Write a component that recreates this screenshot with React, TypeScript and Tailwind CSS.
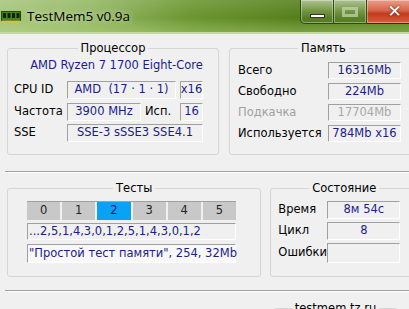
import type { ReactNode } from 'react'

function Field({ children, className = '' }: { children?: ReactNode; className?: string }) {
    return (
        <div
            className={`flex items-center justify-center whitespace-pre border border-t-[#a0a0a0] border-l-[#a0a0a0] border-r-white border-b-white text-[#1c1c8a] ${className}`}
        >
            {children}
        </div>
    )
}

function GroupBox({ title, className = '', children }: { title: string; className?: string; children: ReactNode }) {
    return (
        <fieldset className={`rounded-[3px] border border-[#d5d5d5] ${className}`}>
            <legend className="mx-auto px-[3px] leading-[14px] text-black">{title}</legend>
            {children}
        </fieldset>
    )
}

function RamIcon() {
    return (
        <svg width="20" height="12" viewBox="0 0 20 12">
            <rect x="0.5" y="0.5" width="19" height="9" fill="#3f8a1c" stroke="#1f4a0c" />
            <rect x="2" y="2" width="3" height="5" fill="#1a1a1a" />
            <rect x="6.5" y="2" width="3" height="5" fill="#1a1a1a" />
            <rect x="11" y="2" width="3" height="5" fill="#1a1a1a" />
            <rect x="15.5" y="2" width="3" height="5" fill="#1a1a1a" />
            <rect x="1" y="9.5" width="18" height="2" fill="#e0c040" />
        </svg>
    )
}

function TitleBar() {
    return (
        <div className="flex h-[34px] w-[425px] border-b-2 border-[#c3d8a2] bg-[linear-gradient(to_right,#a8c67c_0%,#93b762_22%,#6a9630_45%,#557f1b_70%,#5a861f_100%)]">
            <div className="flex h-full w-full bg-[linear-gradient(to_bottom,rgba(255,255,255,0.12)_0%,rgba(255,255,255,0)_55%,rgba(190,220,140,0.35)_100%)]">
                <div className="flex items-center gap-[6px] pl-[1px] pt-[1px]">
                    <RamIcon />
                    <span className="font-['Open_Sans',sans-serif] text-[13.5px] text-black [text-shadow:0_0_6px_rgba(255,255,255,0.8)]">
                        TestMem5 v0.9a
                    </span>
                </div>
                <div className="ml-auto mr-[2px] flex h-[24px]">
                    <div className="flex w-[34px] items-end justify-center rounded-bl-[5px] border border-t-0 border-[#2f4a14] bg-[linear-gradient(to_bottom,rgba(255,255,255,0.45),rgba(255,255,255,0.12)_50%,rgba(40,70,10,0.25))] pb-[5px] shadow-[inset_0_0_0_1px_rgba(255,255,255,0.35)]">
                        <div className="h-[4px] w-[15px] border border-[#333] bg-white" />
                    </div>
                    <div className="flex w-[33px] items-center justify-center border border-l-0 border-t-0 border-[#2f4a14] bg-[linear-gradient(to_bottom,rgba(255,255,255,0.45),rgba(255,255,255,0.12)_50%,rgba(40,70,10,0.25))] shadow-[inset_0_0_0_1px_rgba(255,255,255,0.35)]">
                        <div className="h-[10px] w-[16px] border-[3px] border-[#c8d6b8] opacity-70" />
                    </div>
                    <div className="flex w-[56px] items-center justify-center rounded-br-[5px] border border-l-0 border-t-0 border-[#5a1a10] bg-[linear-gradient(to_bottom,#e9a08c_0%,#d9654a_45%,#c23a1e_60%,#d8603c_100%)] shadow-[inset_0_0_0_1px_rgba(255,255,255,0.35)]">
                        <span className="font-['DejaVu_Sans',sans-serif] text-[17px] font-bold leading-none text-white [text-shadow:0_0_2px_#400]">
                            ✕
                        </span>
                    </div>
                </div>
            </div>
        </div>
    )
}

export default function App() {
    const tabs = ['0', '1', '2', '3', '4', '5']

    return (
        <div className="h-[309px] w-[409px] overflow-hidden bg-[#f0f0f0] font-['DejaVu_Sans',sans-serif] text-[11.5px] text-black">
            <TitleBar />
            <div className="w-[425px] px-[7px]">
                <div className="mt-[7px] flex gap-[10px]">
                    <GroupBox title="Процессор" className="w-[212px] pb-[12px]">
                        <div className="mt-[3px] h-[14px] pl-[7px] text-center leading-[14px] text-[#1c1c8a]">
                            AMD Ryzen 7 1700 Eight-Core
                        </div>
                        <div className="mt-[9px] flex h-[18px] items-center pl-[6px]">
                            <span className="w-[53px]">CPU ID</span>
                            <Field className="h-[18px] w-[109px]">{'AMD  (17 · 1 · 1)'}</Field>
                            <Field className="ml-[4px] h-[18px] w-[23px]">x16</Field>
                        </div>
                        <div className="mt-[4px] flex h-[18px] items-center pl-[6px]">
                            <span className="w-[53px]">Частота</span>
                            <Field className="h-[18px] w-[74px]">3900 MHz</Field>
                            <span className="ml-[4px] w-[35px]">Исп.</span>
                            <Field className="h-[18px] w-[23px]">16</Field>
                        </div>
                        <div className="mt-[3px] flex h-[18px] items-center pl-[6px]">
                            <span className="w-[53px]">SSE</span>
                            <Field className="h-[18px] w-[136px]">SSE-3 sSSE3 SSE4.1</Field>
                        </div>
                    </GroupBox>
                    <GroupBox title="Память" className="w-[189px] pb-[12px]">
                        <div className="mt-[7px] flex flex-col gap-[4px] pl-[8px]">
                            <div className="flex h-[17px] items-center">
                                <span className="w-[90px]">Всего</span>
                                <Field className="h-[17px] w-[73px]">16316Mb</Field>
                            </div>
                            <div className="flex h-[17px] items-center">
                                <span className="w-[90px]">Свободно</span>
                                <Field className="h-[17px] w-[73px]">224Mb</Field>
                            </div>
                            <div className="flex h-[17px] items-center">
                                <span className="w-[90px] text-[#a0a0a0]">Подкачка</span>
                                <Field className="h-[17px] w-[73px] !text-[#a8a8a8]">17704Mb</Field>
                            </div>
                            <div className="flex h-[17px] items-center">
                                <span className="w-[90px]">Используется</span>
                                <Field className="h-[17px] w-[73px]">784Mb x16</Field>
                            </div>
                        </div>
                    </GroupBox>
                </div>

                <div className="-mx-[2px] mt-[16px] h-[2px] border-t border-b border-t-[#a0a0a0] border-b-white" />

                <div className="mt-[8px] flex gap-[9px]">
                    <GroupBox title="Тесты" className="w-[255px] pb-[13px]">
                        <div className="ml-[19px] mt-[6px] flex h-[19px] w-[209px] border-t border-[#a0a0a0]">
                            {tabs.map((n, i) => (
                                <div
                                    key={n}
                                    className={`flex flex-1 items-center justify-center border-r-2 border-[#f0f0f0] last:border-r-0 ${
                                        i === 2 ? 'bg-[#0aa2f2] text-[#10106e]' : 'bg-[#c8c8c8] text-[#222]'
                                    }`}
                                >
                                    {n}
                                </div>
                            ))}
                        </div>
                        <Field className="ml-[19px] mt-[3px] h-[17px] w-[209px] !justify-start pl-[1px]">
                            ...2,5,1,4,3,0,1,2,5,1,4,3,0,1,2
                        </Field>
                        <Field className="ml-[19px] mt-[4px] h-[19px] w-[209px] !justify-start bg-[#f8f8f8] pl-[1px]">
                            "Простой тест памяти", 254, 32Mb
                        </Field>
                    </GroupBox>
                    <GroupBox title="Состояние" className="w-[148px] pb-[13px]">
                        <div className="mt-[6px] flex flex-col gap-[3px] pl-[7px]">
                            <div className="flex h-[18px] items-center">
                                <span className="w-[49px]">Время</span>
                                <Field className="h-[18px] w-[73px]">8м 54с</Field>
                            </div>
                            <div className="flex h-[18px] items-center">
                                <span className="w-[49px]">Цикл</span>
                                <Field className="h-[18px] w-[73px]">8</Field>
                            </div>
                            <div className="flex h-[20px] items-center">
                                <span className="w-[49px]">Ошибки</span>
                                <Field className="h-[20px] w-[73px] border-l-[#808080]" />
                            </div>
                        </div>
                    </GroupBox>
                </div>

                <div className="-mx-[2px] mt-[13px] h-[2px] border-t border-b border-t-[#a0a0a0] border-b-white" />

                <div className="ml-[266px] mt-[9px] flex">
                    <GroupBox title="testmem.tz.ru" className="h-[40px] w-[125px]">
                        <div />
                    </GroupBox>
                </div>
            </div>
        </div>
    )
}
